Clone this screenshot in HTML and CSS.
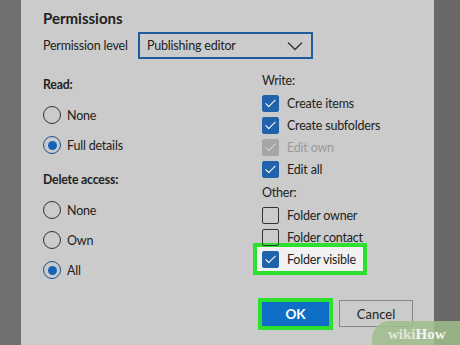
FILE: index.html
```html
<!DOCTYPE html>
<html>
	<head>
		<meta charset="UTF-8">
		<title>Permissions</title>
		<link rel="stylesheet" href="styles.css">
	</head>
	<body>
		<div class="screen">
			<div class="backdrop"></div>

			<div class="dialog">
				<h2 class="title">Permissions</h2>

				<div class="levelRow">
					<span class="levelLabel">Permission level</span>
					<div class="select">
						<span>Publishing editor</span>
						<svg class="chevron" width="16" height="10" viewBox="0 0 16 10">
							<path d="M1 1.5 L8 8.5 L15 1.5" fill="none" stroke="#333" stroke-width="1.3"/>
						</svg>
					</div>
				</div>

				<div class="columns">
					<!-- left column: radio groups -->
					<div class="leftCol">
						<div class="groupHead">Read:</div>
						<div class="radioRow"><span class="radio"></span>None</div>
						<div class="radioRow"><span class="radio on"></span>Full details</div>

						<div class="groupHead gap">Delete access:</div>
						<div class="radioRow"><span class="radio"></span>None</div>
						<div class="radioRow"><span class="radio"></span>Own</div>
						<div class="radioRow"><span class="radio on"></span>All</div>
					</div>

					<!-- right column: checkboxes -->
					<div class="rightCol">
						<div class="checkHead">Write:</div>
						<div class="checkRow"><span class="box on"></span>Create items</div>
						<div class="checkRow"><span class="box on"></span>Create subfolders</div>
						<div class="checkRow off"><span class="box on dim"></span>Edit own</div>
						<div class="checkRow"><span class="box on"></span>Edit all</div>

						<div class="checkHead other">Other:</div>
						<div class="checkRow"><span class="box"></span>Folder owner</div>
						<div class="checkRow"><span class="box"></span>Folder contact</div>
						<div class="checkRow"><span class="highlight"><span class="box on"></span>Folder visible</span></div>
					</div>
				</div>

				<div class="buttons">
					<button class="okBtn">OK</button>
					<button class="cancelBtn">Cancel</button>
				</div>
			</div>

			<div class="backdrop right"></div>
		</div>

		<div class="watermark"><span class="wiki">wiki</span>How</div>
	</body>
</html>
```

FILE: styles.css
```css
body{
	margin: 0;
	font-family: Lato, "Noto Sans", sans-serif;
	font-size: 12.5px;
	letter-spacing: -0.2px;
	color: #222222;
	background-color: #6d6d6d;
	overflow: hidden;
}
.screen{
	display: flex;
	height: 345px;
}
.backdrop{
	width: 21px;
	background-color: #707070;
}
.backdrop.right{
	width: 26px;
	background-color: #696969;
}
.dialog{
	width: 413px;
	background-color: #cbcbcb;
	padding: 0 21px 0 22px;
	box-sizing: border-box;
	display: flex;
	flex-direction: column;
}
.title{
	margin: 0;
	height: 32px;
	line-height: 36px;
	font-size: 15px;
	letter-spacing: 0;
	font-weight: bold;
}
.levelRow{
	display: flex;
	align-items: center;
	gap: 9px;
}
.levelLabel{
	width: 86px;
	white-space: nowrap;
}
.select{
	width: 175px;
	height: 27px;
	box-sizing: border-box;
	border: 2px solid #1c5c9f;
	display: flex;
	align-items: center;
	justify-content: space-between;
	padding: 0 8px 0 7px;
}
.chevron{
	margin-top: 1px;
}
.columns{
	display: flex;
	margin-top: 11px;
}
.leftCol{
	width: 219px;
}
.groupHead{
	height: 30px;
	line-height: 30px;
	font-size: 12.3px;
	font-weight: bold;
}
.groupHead.gap{
	margin-top: 5px;
}
.radioRow{
	height: 30px;
	display: flex;
	align-items: center;
	gap: 6px;
}
.radio{
	width: 18px;
	height: 18px;
	box-sizing: border-box;
	border: 1.3px solid #333333;
	border-radius: 50%;
	display: flex;
	align-items: center;
	justify-content: center;
}
.radio.on{
	border-color: #1b4f8c;
}
.radio.on::after{
	content: "";
	width: 9px;
	height: 9px;
	border-radius: 50%;
	background-color: #1466b4;
}
.checkHead{
	height: 22px;
	line-height: 22px;
}
.checkHead.other{
	margin-top: 2px;
}
.checkRow{
	height: 22px;
	display: flex;
	align-items: center;
}
.checkRow.off{
	color: #9a9a9a;
}
.box{
	width: 17px;
	height: 17px;
	box-sizing: border-box;
	border: 1px solid #333333;
	border-radius: 2px;
	margin-right: 8px;
	position: relative;
}
.box.on{
	background-color: #2063aa;
	border-color: #2063aa;
}
.box.on::after{
	content: "";
	position: absolute;
	left: 5px;
	top: 1px;
	width: 4px;
	height: 9px;
	border: solid #ffffff;
	border-width: 0 1.3px 1.3px 0;
	transform: rotate(45deg);
}
.box.dim{
	background-color: #a6a6a6;
	border-color: #a6a6a6;
}
.box.dim::after{
	border-color: #d4d4d4;
}
.highlight{
	display: flex;
	align-items: center;
	height: 24px;
	background-color: #f1f1f1;
	margin-left: -5px;
	padding: 0 7px 0 5px;
	box-shadow: 0 0 0 4px #2de02d;
}
.buttons{
	display: flex;
	justify-content: flex-end;
	align-items: center;
	gap: 10px;
	margin-top: 15px;
}
.okBtn{
	width: 67px;
	height: 24px;
	border: none;
	background-color: #0f6fc6;
	color: #ffffff;
	font-family: inherit;
	font-size: 13.5px;
	font-weight: bold;
	box-shadow: 0 0 0 4px #2de02d;
}
.cancelBtn{
	width: 74px;
	height: 27px;
	border: 1px solid #888888;
	background-color: #cbcbcb;
	color: #222222;
	font-family: inherit;
	font-size: 13px;
}
.watermark{
	position: absolute;
	left: 372px;
	top: 321px;
	width: 100px;
	height: 30px;
	padding-left: 16px;
	box-sizing: border-box;
	border-top-left-radius: 18px;
	background-color: rgba(160, 190, 140, 0.85);
	font-family: "Liberation Serif", serif;
	font-weight: bold;
	font-size: 15px;
	line-height: 26px;
	letter-spacing: 0;
	color: #f4f4f4;
}
.wiki{
	color: #e2e6dc;
}
```
